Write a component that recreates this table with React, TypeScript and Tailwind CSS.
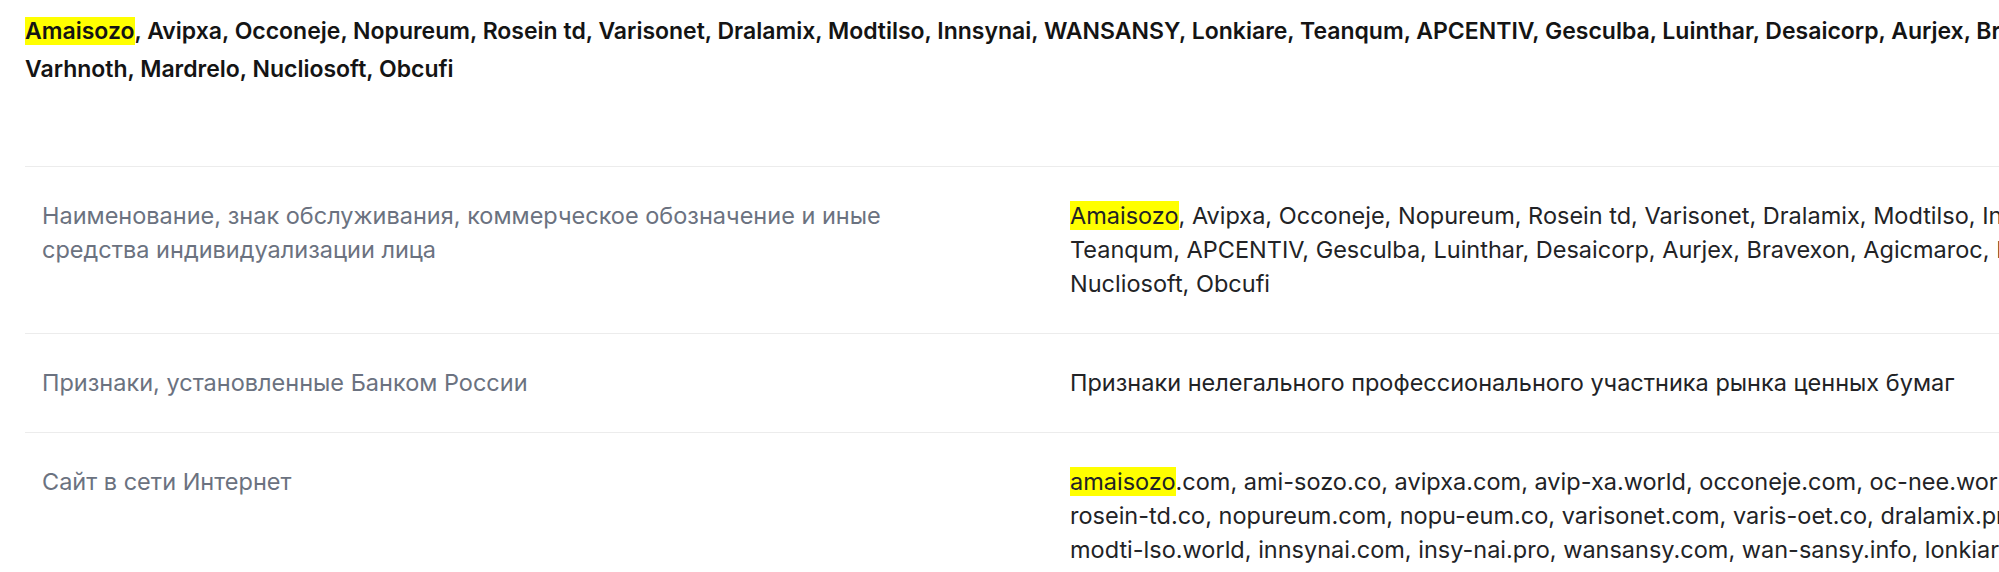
import React from 'react';

const names =
  'Avipxa, Occoneje, Nopureum, Rosein td, Varisonet, Dralamix, Modtilso, Innsynai, WANSANSY, Lonkiare, Teanqum, APCENTIV, Gesculba, Luinthar, Desaicorp, Aurjex, Bravexon, Agicmaroc, Iltomarc, Varhnoth, Mardrelo, Nucliosoft, Obcufi';

const sites =
  '.com, ami-sozo.co, avipxa.com, avip-xa.world, occoneje.com, oc-nee.world, rosein-td.com, nopureum.pro, rosein-td.co, nopureum.com, nopu-eum.co, varisonet.com, varis-oet.co, dralamix.pro, dra-lamix.co, modtilso.com, modti-lso.world, innsynai.com, insy-nai.pro, wansansy.com, wan-sansy.info, lonkiare.com, lon-kiare.co, teanqum.com, tean-qum.world';

const Mark = ({ children }: { children: React.ReactNode }) => (
  <mark className="bg-[#ffff00] text-inherit">{children}</mark>
);

const rows: { label: string; value: React.ReactNode }[] = [
  {
    label: 'Наименование, знак обслуживания, коммерческое обозначение и иные средства индивидуализации лица',
    value: (
      <>
        <Mark>Amaisozo</Mark>, {names}
      </>
    ),
  },
  {
    label: 'Признаки, установленные Банком России',
    value: 'Признаки нелегального профессионального участника рынка ценных бумаг',
  },
  {
    label: 'Сайт в сети Интернет',
    value: (
      <>
        <Mark>amaisozo</Mark>
        {sites}
      </>
    ),
  },
];

export default function App() {
  return (
    <div className="w-[1999px] h-[572px] overflow-hidden bg-white font-['Inter',sans-serif]">
      <div className="w-[2362px] ml-[25px] pt-3">
        {/* Header */}
        <p className="text-[23px] leading-[38px] font-semibold text-[#141414]">
          <Mark>Amaisozo</Mark>, {names}
        </p>

        {/* Details table */}
        <div className="mt-[78px] border-t border-[#ececec]">
          {rows.map((row, i) => (
            <div
              key={i}
              className="grid grid-cols-[920px_1320px] gap-x-[108px] px-[17px] py-8 border-b border-[#ececec] text-[23.5px] leading-[34px]"
            >
              <div className="text-[#6b7280]">{row.label}</div>
              <div className="text-[#222326]">{row.value}</div>
            </div>
          ))}
        </div>
      </div>
    </div>
  );
}
